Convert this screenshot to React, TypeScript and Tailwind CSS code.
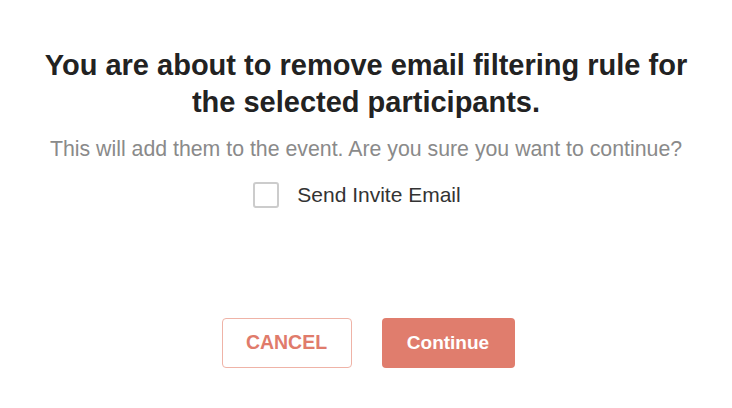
import React from "react";

export default function App() {
  return (
    <div
      className="w-[732px] h-[408px] bg-white flex flex-col items-center pt-[47px]"
      style={{ fontFamily: '"Liberation Sans", Arial, sans-serif' }}
    >
      <h1 className="text-[29px] leading-[37px] font-bold text-[#222222] text-center w-[700px]">
        You are about to remove email filtering rule for
        <br />
        the selected participants.
      </h1>
      <p className="mt-[16px] text-[21.3px] leading-[24px] text-[#8a8a8a] text-center whitespace-nowrap">
        This will add them to the event. Are you sure you want to continue?
      </p>
      <label className="mt-[21px] mr-[18px] flex items-center gap-[18px] cursor-pointer">
        <span className="w-[26px] h-[26px] border-2 border-[#cccccc] rounded-[3px] bg-white" />
        <span className="text-[21px] leading-[24px] text-[#333333]">Send Invite Email</span>
      </label>
      <div className="mt-[110px] flex gap-[30px] pl-[4px]">
        <button className="w-[130px] h-[50px] border border-[#efb3a7] rounded-[4px] text-[#e07b6b] text-[19.5px] font-bold bg-white">
          CANCEL
        </button>
        <button className="w-[133px] h-[50px] rounded-[4px] bg-[#e07d6d] text-white text-[19px] font-bold">
          Continue
        </button>
      </div>
    </div>
  );
}
